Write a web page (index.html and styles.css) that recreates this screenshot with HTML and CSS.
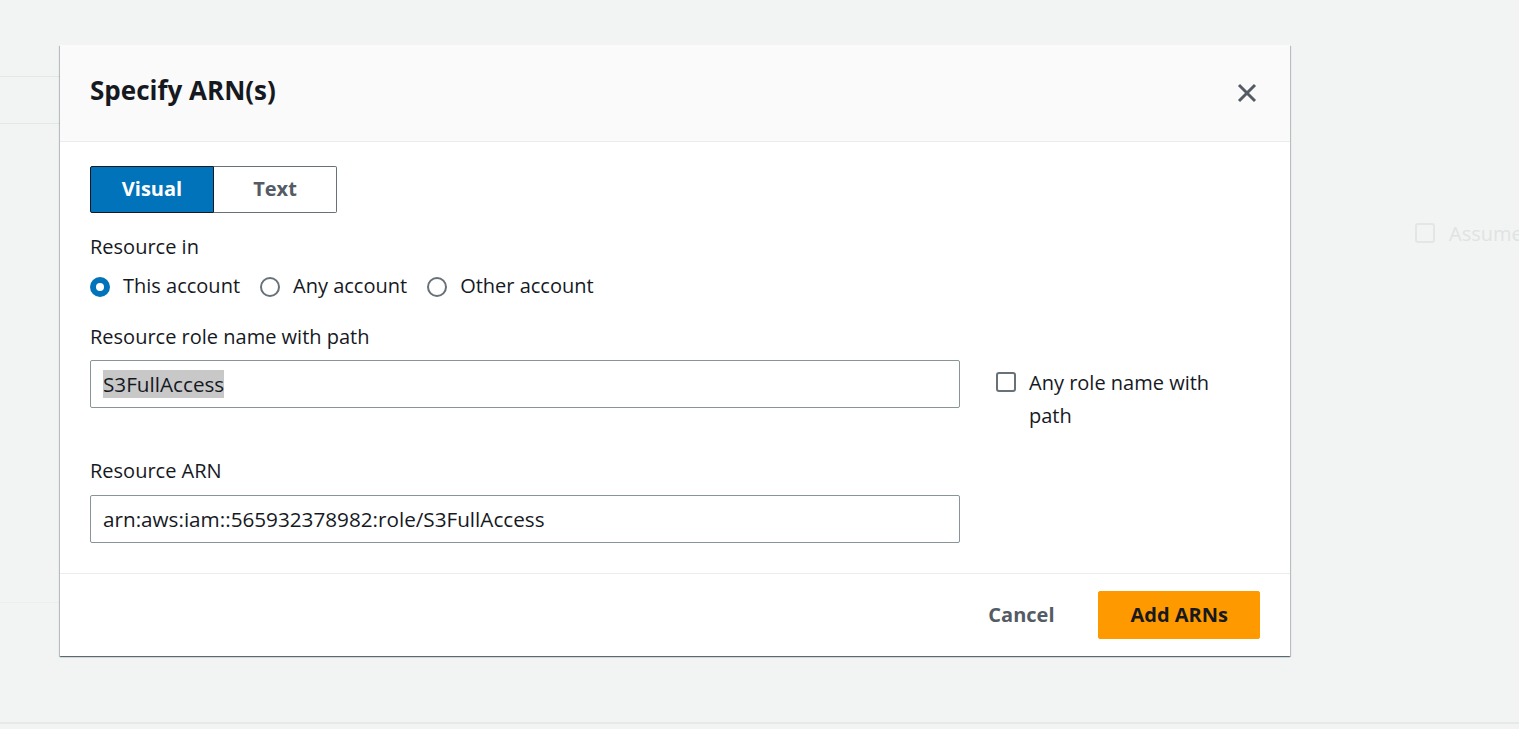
FILE: index.html
```html
<!DOCTYPE html>
<html lang="en">
<head>
<meta charset="utf-8">
<title>Specify ARN(s)</title>
<link rel="stylesheet" href="styles.css">
</head>
<body>
<div class="bg-page">
  <div class="bg-lines"></div>
  <div class="bg-assume">
    <span class="bg-check"></span>
    <span class="bg-assume-text">Assume</span>
  </div>
  <div class="bg-line3"></div>
  <div class="bg-bottom"></div>
</div>

<div class="modal" role="dialog" aria-labelledby="modal-title">
  <div class="modal-header">
    <h2 id="modal-title" class="modal-title">Specify ARN(s)</h2>
    <button class="close-btn" aria-label="Close">
      <svg width="20" height="20" viewBox="0 0 20 20" aria-hidden="true">
        <path d="M2 2 L18 18 M18 2 L2 18" stroke="#545b64" stroke-width="3" fill="none"/>
      </svg>
    </button>
  </div>

  <div class="modal-body">
    <div class="segmented">
      <button class="seg seg-active">Visual</button>
      <button class="seg seg-inactive">Text</button>
    </div>

    <div class="label label-resource-in">Resource in</div>
    <div class="radio-group">
      <label class="radio-item">
        <span class="radio radio-checked"></span>
        <span>This account</span>
      </label>
      <label class="radio-item">
        <span class="radio"></span>
        <span>Any account</span>
      </label>
      <label class="radio-item">
        <span class="radio"></span>
        <span>Other account</span>
      </label>
    </div>

    <div class="label label-role">Resource role name with path</div>
    <div class="field-row">
      <div class="text-input"><span class="selected-text">S3FullAccess</span></div>
      <label class="checkbox-item">
        <span class="checkbox"></span>
        <span class="checkbox-text">Any role name with path</span>
      </label>
    </div>

    <div class="label label-arn">Resource ARN</div>
    <div class="field-row">
      <div class="text-input">arn:aws:iam::565932378982:role/S3FullAccess</div>
    </div>
  </div>

  <div class="modal-footer">
    <button class="btn-link">Cancel</button>
    <button class="btn-primary">Add ARNs</button>
  </div>
</div>
</body>
</html>
```

FILE: styles.css
```css
* {
  box-sizing: border-box;
}

html, body {
  margin: 0;
  padding: 0;
}

body {
  width: 1519px;
  height: 729px;
  overflow: hidden;
  background: #f2f3f3;
  font-family: "Open Sans", "Noto Sans", sans-serif;
  color: #16191f;
  position: relative;
}

/* ---------- faded background page ---------- */
.bg-page {
  height: 729px;
  display: flex;
  flex-direction: column;
}

.bg-lines {
  margin-top: 76px;
  width: 700px;
  height: 48px;
  border-top: 1px solid #e4e7e7;
  border-bottom: 1px solid #e4e7e7;
}

.bg-assume {
  margin-top: 99px;
  margin-left: 1415px;
  display: flex;
  align-items: center;
  gap: 14px;
  height: 20px;
  white-space: nowrap;
}

.bg-check {
  width: 20px;
  height: 20px;
  border: 2px solid #e3e6e6;
  border-radius: 3px;
  flex: none;
}

.bg-assume-text {
  font-size: 20px;
  color: #dfe3e3;
}

.bg-line3 {
  margin-top: 359px;
  width: 700px;
  border-top: 1px solid #eceeee;
}

.bg-bottom {
  margin-top: 119px;
  border-top: 2px solid #e7e9e9;
}

/* ---------- modal ---------- */
.modal {
  position: absolute;
  left: 60px;
  top: 45px;
  width: 1230px;
  background: #ffffff;
  box-shadow: 0 1px 1px 0 rgba(0, 28, 36, 0.45),
              1px 1px 1px 0 rgba(0, 28, 36, 0.18),
              -1px 1px 1px 0 rgba(0, 28, 36, 0.18);
}

.modal-header {
  height: 97px;
  background: #fafafa;
  border-bottom: 1px solid #eaeded;
  display: flex;
  align-items: center;
  justify-content: space-between;
  padding: 0 33px 0 30px;
}

.modal-title {
  margin: 0;
  font-size: 26px;
  font-weight: 700;
  line-height: 32px;
  color: #16191f;
  padding-bottom: 6px;
}

.close-btn {
  border: none;
  background: none;
  padding: 0;
  width: 20px;
  height: 20px;
  display: flex;
  cursor: pointer;
}

.modal-body {
  padding: 24px 30px 30px;
}

/* segmented control */
.segmented {
  display: flex;
  height: 47px;
}

.seg {
  font-family: inherit;
  font-size: 20px;
  font-weight: 700;
  height: 47px;
  padding: 0 0 2px;
  cursor: pointer;
}

.seg-active {
  width: 124px;
  background: #0073bb;
  color: #ffffff;
  border: 1px solid #16191f;
  border-radius: 2px 0 0 2px;
}

.seg-inactive {
  width: 123px;
  background: #ffffff;
  color: #545b64;
  border: 1px solid #687078;
  border-left: none;
  border-radius: 0 2px 2px 0;
}

/* labels */
.label {
  font-size: 20px;
  line-height: 28px;
  color: #16191f;
}

.label-resource-in {
  margin-top: 20px;
}

.label-role {
  margin-top: 23px;
  margin-bottom: 9px;
}

.label-arn {
  margin-top: 25px;
  margin-bottom: 10px;
}

/* radios */
.radio-group {
  margin-top: 11px;
  display: flex;
  gap: 20px;
  font-size: 20px;
  line-height: 28px;
}

.radio-item {
  display: flex;
  align-items: center;
  gap: 13px;
}

.radio {
  width: 20px;
  height: 20px;
  border-radius: 50%;
  border: 2px solid #687078;
  background: #fff;
  flex: none;
  margin-top: 2px;
}

.radio-checked {
  border: 6px solid #0073bb;
}

/* inputs */
.field-row {
  display: grid;
  grid-template-columns: 870px 1fr;
  column-gap: 36px;
  align-items: start;
}

.text-input {
  height: 48px;
  border: 1px solid #879596;
  border-radius: 2px;
  padding: 0 12px;
  font-size: 20.7px;
  display: flex;
  align-items: center;
  color: #16191f;
  white-space: nowrap;
}

.selected-text {
  background: #c8c8c8;
}

.checkbox-item {
  display: flex;
  align-items: flex-start;
  gap: 13px;
  padding-top: 6px;
  font-size: 20px;
  line-height: 33px;
}

.checkbox-text {
  max-width: 200px;
}

.checkbox {
  width: 20px;
  height: 20px;
  border: 2px solid #687078;
  border-radius: 3px;
  flex: none;
  margin-top: 6px;
}

/* footer */
.modal-footer {
  height: 83px;
  border-top: 1px solid #eaeded;
  display: flex;
  align-items: center;
  justify-content: flex-end;
  padding: 0 30px;
}

.btn-link {
  font-family: inherit;
  font-size: 20px;
  font-weight: 700;
  color: #545b64;
  background: none;
  border: none;
  padding: 0 20px 2px;
  height: 48px;
  margin-right: 24px;
  cursor: pointer;
}

.btn-primary {
  font-family: inherit;
  font-size: 20px;
  font-weight: 700;
  color: #16191f;
  background: #ff9900;
  border: 1px solid #ff9900;
  border-radius: 2px;
  height: 48px;
  padding: 0 31px 2px;
  cursor: pointer;
}
```
